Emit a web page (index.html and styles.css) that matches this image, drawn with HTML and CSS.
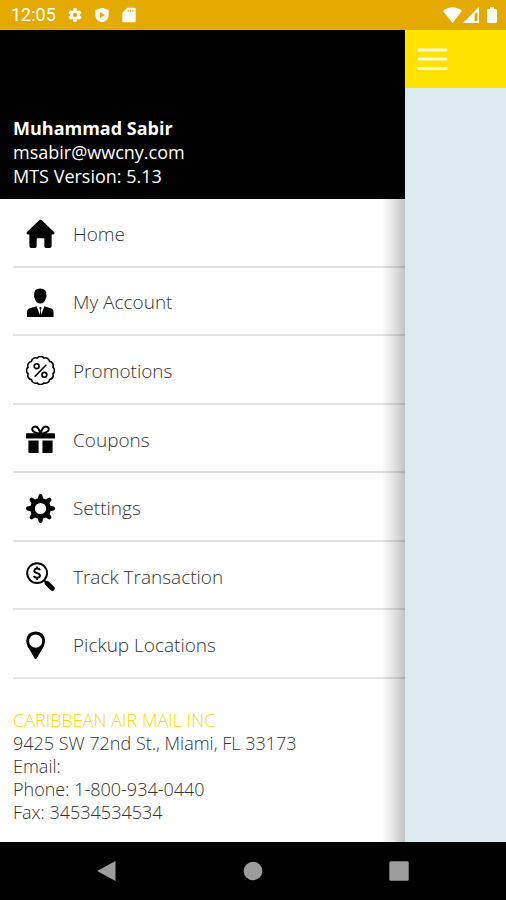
FILE: index.html
```html
<!DOCTYPE html>
<html lang="en">
<head>
<meta charset="utf-8">
<meta name="viewport" content="width=device-width, initial-scale=1">
<title>MTS Menu</title>
<link rel="stylesheet" href="styles.css">
</head>
<body>
<div class="status-bar">
  <span class="clock">12:05</span>
  <svg class="status-icon" viewBox="0 0 24 24" aria-hidden="true"><path d="M19.400 13a7.500 7.500 0 0 0 0-2l2.100-1.600a.5.5 0 0 0 .1-.6l-2-3.500a.5.5 0 0 0-.6-.2l-2.500 1a7 7 0 0 0-1.700-1L14.500 2.400A.5.5 0 0 0 14 2h-4a.5.5 0 0 0-.5.4L9.100 5.100a8 8 0 0 0-1.700 1l-2.500-1a.5.5 0 0 0-.6.2l-2 3.500a.5.5 0 0 0 .1.600L4.600 11a8 8 0 0 0 0 2l-2.100 1.600a.5.5 0 0 0-.1.600l2 3.500c.1.200.4.300.6.200l2.500-1a7 7 0 0 0 1.700 1l.3 2.700c0 .2.200.4.500.4h4c.3 0 .5-.2.500-.4l.4-2.700a8 8 0 0 0 1.700-1l2.500 1c.2.100.5 0 .6-.2l2-3.500a.5.5 0 0 0-.1-.6zM12 15.200a3.200 3.200 0 1 1 0-6.400 3.200 3.200 0 0 1 0 6.400z"/></svg>
  <svg class="status-icon" viewBox="0 0 24 24" aria-hidden="true"><path fill-rule="evenodd" d="M12 1 2 4.500V12c0 5.500 4 9.500 10 11 6-1.500 10-5.500 10-11V4.500zM9 7.500l7.500 4.500L9 16.500z"/></svg>
  <svg class="status-icon" viewBox="0 0 24 24" aria-hidden="true"><path fill-rule="evenodd" d="M9.500 1H20a2 2 0 0 1 2 2v18a2 2 0 0 1-2 2H4a2 2 0 0 1-2-2V8.500zM10 4v3h1.500V4zm3.500 0v3H15V4zM17 4v3h1.500V4z"/></svg>
  <span class="spacer"></span>
  <svg class="radio-icons" viewBox="0 0 56 18" aria-hidden="true"><path d="M0 5Q9.500-2.500 19 5L9.500 17z"/><path fill-rule="evenodd" d="M20 17 36 1v16zM31.500 8v7h3V6z"/><path d="M47 1h4v2h2q1 0 1 1v12q0 1-1 1h-8q-1 0-1-1V4q0-1 1-1h2z"/></svg>
</div>

<div class="screen">
  <aside class="drawer">
    <header class="profile">
      <strong>Muhammad Sabir</strong>
      <span>msabir@wwcny.com</span>
      <span>MTS Version: 5.13</span>
    </header>
    <nav class="menu">
      <a class="item" href="#home">
        <svg class="icon" viewBox="0 0 30 30" aria-hidden="true"><path d="M13.600 1.300q1.400-1.200 2.800 0L29 13.400q1.400 2.200-1 2.600h-1.500v12q0 2-2 2h-4q-1.500 0-1.500-1.500V21q0-1-1-1h-6q-1 0-1 1v7.500q0 1.500-1.500 1.500h-4q-2 0-2-2V16H2q-2.400-.4-1-2.600z"/></svg>
        <span>Home</span>
      </a>
      <a class="item" href="#account">
        <svg class="icon" viewBox="0 0 30 30" aria-hidden="true"><path d="M8.500 7Q8 .5 14.500.5 21.500.5 21 7q1 1.500-.5 3.500-1.500 5.500-5.700 5.500T9 10.500Q7.500 8.500 8.500 7zM1 30v-5q0-3 3-4l7-2 3.300 9 .4-5.500-1-2 1.300-1 1.300 1-1 2 .4 5.500 3.300-9 6.500 2q3 1 3 4v5z"/></svg>
        <span>My Account</span>
      </a>
      <a class="item" href="#promotions">
        <svg class="icon line" viewBox="0 0 30 30" aria-hidden="true"><path d="M28.300 15A4.400 4.400 0 0 1 26.500 21.600A4.400 4.400 0 0 1 21.600 26.500A4.400 4.400 0 0 1 15 28.300A4.400 4.400 0 0 1 8.400 26.500A4.400 4.400 0 0 1 3.500 21.600A4.400 4.400 0 0 1 1.700 15A4.400 4.400 0 0 1 3.500 8.400A4.400 4.400 0 0 1 8.400 3.500A4.400 4.400 0 0 1 15 1.700A4.400 4.400 0 0 1 21.600 3.500A4.400 4.400 0 0 1 26.500 8.400A4.400 4.400 0 0 1 28.300 15z" transform="rotate(15 15 15)"/><path d="M9 21.500 21 9"/><circle cx="11" cy="10.500" r="2.500"/><circle cx="19" cy="19.500" r="2.500"/></svg>
        <span>Promotions</span>
      </a>
      <a class="item" href="#coupons">
        <svg class="icon" viewBox="0 0 30 30" aria-hidden="true"><path d="M0 9.500q0-1 1-1h28q1 0 1 1V14H0zM2.500 16H13v13H3.500q-1 0-1-1zM17 16h10.500v12q0 1-1 1H17z"/><path class="ribbon" d="M15 9Q13 1.500 9.500 1.500 6 2 6.500 5q1 3 8.500 4 7.500-1 8.500-4 .5-3-3-3.500Q17 1.500 15 9z"/></svg>
        <span>Coupons</span>
      </a>
      <a class="item" href="#settings">
        <svg class="icon" viewBox="0 0 30 30" aria-hidden="true"><defs><path id="tooth" d="M12 6 13 1.500Q13.200 0 15 0t2 1.500L18 6z"/></defs><circle class="gear-ring" cx="15" cy="15" r="8.300"/><use href="#tooth"/><use href="#tooth" transform="rotate(45 15 15)"/><use href="#tooth" transform="rotate(90 15 15)"/><use href="#tooth" transform="rotate(135 15 15)"/><use href="#tooth" transform="rotate(180 15 15)"/><use href="#tooth" transform="rotate(225 15 15)"/><use href="#tooth" transform="rotate(270 15 15)"/><use href="#tooth" transform="rotate(315 15 15)"/></svg>
        <span>Settings</span>
      </a>
      <a class="item" href="#track">
        <svg class="icon" viewBox="0 0 30 30" aria-hidden="true"><g class="lens"><circle cx="11.500" cy="11.500" r="10.300"/><path d="M14.500 8.500Q14 6.800 11.500 6.800T8.600 9q0 1.800 2.900 2.500t3 2.600q-.2 2.200-3 2.200t-3.200-2M11.500 4.700v2.100M11.500 16.300v2.200"/></g><path class="handle" d="m21.800 22 5.500 5.300"/><path class="neck" d="m18.500 18.800 2 2"/></svg>
        <span>Track Transaction</span>
      </a>
      <a class="item" href="#pickup">
        <svg class="icon" viewBox="0 0 30 30" aria-hidden="true"><path fill-rule="evenodd" d="M10 .5q9.500.3 9.800 10Q19.500 15 16 20l-5 8.500q-1 1.300-2 0L4 20Q.5 15 .2 10.500.5.800 10 .5zM10 3.700a6.800 6.800 0 1 0 0 13.600 6.800 6.800 0 0 0 0-13.600z"/></svg>
        <span>Pickup Locations</span>
      </a>
    </nav>
    <address class="company">
      <span class="company-name">CARIBBEAN AIR MAIL INC</span>
      <span>9425 SW 72nd St., Miami, FL 33173</span>
      <span>Email:</span>
      <span>Phone: 1-800-934-0440</span>
      <span>Fax: 34534534534</span>
    </address>
  </aside>
  <main class="page">
    <div class="toolbar">
      <button class="menu-button" type="button" aria-label="Menu">
        <svg viewBox="0 0 30 24" aria-hidden="true"><path d="M1.500 3h27M1.500 12h27M1.500 21.500h27"/></svg>
      </button>
    </div>
  </main>
</div>

<div class="nav-bar">
  <button type="button" aria-label="Back"><svg viewBox="0 0 22 22" aria-hidden="true"><path d="M19.500 1v20L2 11.500q-1-.5 0-1z"/></svg></button>
  <button type="button" aria-label="Home"><svg viewBox="0 0 22 22" aria-hidden="true"><circle cx="11" cy="11" r="9.300"/></svg></button>
  <button type="button" aria-label="Recent apps"><svg viewBox="0 0 22 22" aria-hidden="true"><rect x="1.300" y="1.300" width="19.400" height="19.400" rx="1.500"/></svg></button>
</div>
</body>
</html>
```

FILE: styles.css
```css
* {
  box-sizing: border-box;
}

body {
  margin: 0;
  min-height: 100vh;
  display: flex;
  flex-direction: column;
  font-family: "Open Sans", "Noto Sans", sans-serif;
  background: #dce9ef;
}

svg {
  display: block;
}

button {
  border: 0;
  padding: 0;
  background: none;
}

.status-bar {
  height: 30px;
  padding: 0 7px 0 11px;
  display: flex;
  align-items: center;
  gap: 11px;
  background: #e4aa00;
  color: #fff;
  fill: #fff;
}

.clock {
  font: 400 18px/30px Roboto, sans-serif;
}

.status-icon {
  width: 16px;
  height: 16px;
}

.spacer {
  flex: 1;
}

.radio-icons {
  width: 56px;
  height: 18px;
}

.screen {
  flex: 1;
  display: flex;
}

.drawer {
  position: relative;
  width: 80%;
  display: flex;
  flex-direction: column;
  background: #fff;
}

.profile {
  min-height: 169px;
  padding: 0 13px 11px;
  display: flex;
  flex-direction: column;
  justify-content: flex-end;
  background: #000;
  color: #fff;
  font-size: 18px;
  line-height: 24px;
}

.menu {
  flex: 1;
  display: flex;
  flex-direction: column;
  padding-left: 13px;
}

.menu::after {
  content: "";
  position: absolute;
  top: 169px;
  right: 0;
  bottom: 0;
  width: 24px;
  background: linear-gradient(to right, rgba(0, 0, 0, 0), rgba(0, 0, 0, 0.1) 50%, rgba(0, 0, 0, 0.24));
  pointer-events: none;
}

.item {
  flex: 1;
  display: flex;
  align-items: center;
  gap: 18px;
  padding: 3px 0 0 13px;
  border-bottom: 2px solid #e2e2e2;
  color: #333;
  font-size: 19px;
  font-weight: 300;
  line-height: 24px;
  text-decoration: none;
}

.icon {
  width: 29px;
  height: 29px;
  fill: #000;
}

.line,
.ribbon,
.gear-ring,
.lens,
.handle,
.neck {
  fill: none;
  stroke: #000;
}

.line {
  stroke-width: 1.7px;
}

.ribbon {
  stroke-width: 2px;
}

.gear-ring {
  stroke-width: 5px;
}

.lens {
  stroke-width: 2px;
}

.handle {
  stroke-width: 5px;
  stroke-linecap: round;
}

.neck {
  stroke-width: 2px;
}

.company {
  height: 163px;
  padding: 30px 13px 0;
  display: flex;
  flex-direction: column;
  color: #333;
  font-size: 18px;
  font-style: normal;
  font-weight: 300;
  line-height: 23px;
}

.company-name {
  color: #fbd800;
}

.page {
  flex: 1;
}

.toolbar {
  height: 58px;
  padding: 0 12px;
  display: flex;
  align-items: center;
  background: #ffe300;
}

.menu-button svg {
  width: 31px;
  height: 24px;
  fill: none;
  stroke: #fffbd8;
  stroke-width: 3px;
  stroke-linecap: round;
}

.nav-bar {
  height: 58px;
  padding: 0 34px;
  display: flex;
  align-items: center;
  background: #000;
}

.nav-bar button {
  flex: 1;
  display: flex;
  justify-content: center;
}

.nav-bar svg {
  width: 22px;
  height: 22px;
  fill: #9c9c9c;
}
```
